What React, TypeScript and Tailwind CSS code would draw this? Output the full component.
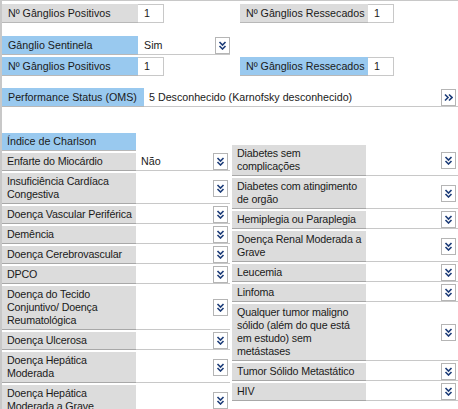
import React from 'react'

const GRAY = 'bg-[#dcdcdc]'
const BLUE = 'bg-[#99c9ef]'

function DropBtn({ dir = 'down' }: { dir?: 'down' | 'right' }) {
  return (
    <span className="flex h-[17px] w-[15px] shrink-0 items-center justify-center border border-[#b5b5b5] bg-white">
      <svg width="9" height="9" viewBox="0 0 9 9" className={dir === 'right' ? '-rotate-90' : ''}>
        <path d="M1.5 1 L4.5 4 L7.5 1 M1.5 5 L4.5 8 L7.5 5" fill="none" stroke="#1c3c78" strokeWidth="1.6" />
      </svg>
    </span>
  )
}

function NumField({ label, blue, labelW }: { label: string; blue?: boolean; labelW: string }) {
  return (
    <div className="flex h-[19px] items-stretch">
      <div className={`${labelW} ${blue ? BLUE : GRAY} flex shrink-0 items-center whitespace-nowrap border-b border-[#b8b8b8] pl-[6px]`}>
        {label}
      </div>
      <div className="flex w-[26px] shrink-0 items-center border-y border-r border-[#c8c8c8] bg-white px-[6px]">1</div>
    </div>
  )
}

const leftRows = [
  { label: 'Enfarte do Miocárdio', value: 'Não' },
  { label: 'Insuficiência Cardíaca Congestiva' },
  { label: 'Doença Vascular Periférica' },
  { label: 'Demência' },
  { label: 'Doença Cerebrovascular' },
  { label: 'DPCO' },
  { label: 'Doença do Tecido Conjuntivo/ Doença Reumatológica' },
  { label: 'Doença Ulcerosa' },
  { label: 'Doença Hepática Moderada' },
  { label: 'Doença Hepática Moderada a Grave' },
]

const rightRows = [
  { label: 'Diabetes sem complicações' },
  { label: 'Diabetes com atingimento de orgão' },
  { label: 'Hemiplegia ou Paraplegia' },
  { label: 'Doença Renal Moderada a Grave' },
  { label: 'Leucemia' },
  { label: 'Linfoma' },
  { label: 'Qualquer tumor maligno sólido (além do que está em estudo) sem metástases' },
  { label: 'Tumor Sólido Metastático' },
  { label: 'HIV' },
]

function ComboRow({ label, value, labelW }: { label: string; value?: string; labelW: string }) {
  return (
    <div className="flex items-stretch">
      <div className={`${labelW} ${GRAY} shrink-0 border-b border-[#a8a8a8] py-[2px] pl-[5px] tracking-[-0.15px]`}>{label}</div>
      <div className="flex flex-1 items-center justify-between border-b border-[#c8c8c8] bg-white pl-[5px] pr-[2px]">
        <span>{value}</span>
        <DropBtn />
      </div>
    </div>
  )
}

export default function App() {
  return (
    <div className="h-[409px] w-[458px] overflow-hidden border-l-2 border-[#c8c8c8] bg-white font-['Liberation_Sans',Arial,sans-serif] text-[10.7px] leading-[13px] text-[#1a1a1a]">
      {/* Gânglios */}
      <div className="border-t border-[#c8c8c8] pt-[3px]">
        <div className="flex">
          <NumField label="Nº Gânglios Positivos" labelW="w-[136px]" />
          <div className="ml-[76px]">
            <NumField label="Nº Gânglios Ressecados" labelW="w-[128px]" />
          </div>
        </div>
      </div>

      <div className="mt-[13px] flex flex-col gap-[2px]">
        <div className="flex h-[19px] items-stretch">
          <div className={`w-[136px] ${BLUE} flex items-center border-b border-[#b8b8b8] pl-[6px]`}>Gânglio Sentinela</div>
          <div className="flex w-[92px] items-center justify-between border-b border-[#c8c8c8] pl-[6px]">
            <span>Sim</span>
            <DropBtn />
          </div>
        </div>
        <div className="flex">
          <NumField label="Nº Gânglios Positivos" blue labelW="w-[136px]" />
          <div className="ml-[76px]">
            <NumField label="Nº Gânglios Ressecados" blue labelW="w-[128px]" />
          </div>
        </div>
      </div>

      {/* Performance status */}
      <div className="mt-[12px] flex h-[19px] items-stretch">
        <div className={`w-[142px] ${BLUE} flex shrink-0 items-center whitespace-nowrap border-b border-[#b8b8b8] pl-[6px]`}>Performance Status (OMS)</div>
        <div className="flex flex-1 items-center justify-between border-b border-[#c8c8c8] pl-[5px] pr-[2px]">
          <span>5 Desconhecido (Karnofsky desconhecido)</span>
          <DropBtn dir="right" />
        </div>
      </div>

      {/* Charlson */}
      <div className="mt-[26px] flex items-start gap-[2px]">
        <div className="flex w-[228px] flex-col gap-[2px]">
          <div className={`w-[134px] ${BLUE} border-b border-[#b8b8b8] py-[2px] pl-[5px]`}>Índice de Charlson</div>
          {leftRows.map((r) => (
            <ComboRow key={r.label} label={r.label} value={r.value} labelW="w-[134px]" />
          ))}
        </div>
        <div className="mt-[12px] flex flex-1 flex-col gap-[2px]">
          {rightRows.map((r) => (
            <ComboRow key={r.label} label={r.label} labelW="w-[134px]" />
          ))}
        </div>
      </div>
    </div>
  )
}
